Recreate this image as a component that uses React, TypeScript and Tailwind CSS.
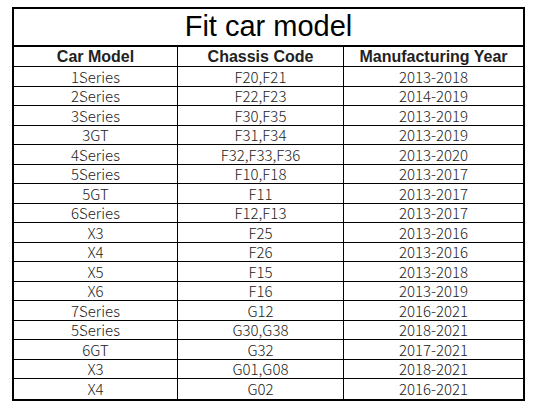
const rows: [string, string, string][] = [
  ['1Series', 'F20,F21', '2013-2018'],
  ['2Series', 'F22,F23', '2014-2019'],
  ['3Series', 'F30,F35', '2013-2019'],
  ['3GT', 'F31,F34', '2013-2019'],
  ['4Series', 'F32,F33,F36', '2013-2020'],
  ['5Series', 'F10,F18', '2013-2017'],
  ['5GT', 'F11', '2013-2017'],
  ['6Series', 'F12,F13', '2013-2017'],
  ['X3', 'F25', '2013-2016'],
  ['X4', 'F26', '2013-2016'],
  ['X5', 'F15', '2013-2018'],
  ['X6', 'F16', '2013-2019'],
  ['7Series', 'G12', '2016-2021'],
  ['5Series', 'G30,G38', '2018-2021'],
  ['6GT', 'G32', '2017-2021'],
  ['X3', 'G01,G08', '2018-2021'],
  ['X4', 'G02', '2016-2021'],
];

const cols = 'grid grid-cols-[164px_166px_179px]';

export default function App() {
  return (
    <div className="w-[552px] h-[408px] bg-white pt-[7px] pl-[12px]">
      <div className="w-[513px] border-2 border-black text-black">
        <div className="h-[38px] border-b-2 border-black flex items-center justify-center font-['Liberation_Sans',Arial,sans-serif] text-[29px] leading-none pb-[1px]">
          Fit car model
        </div>
        <div className={`${cols} h-[20px] border-b border-black font-['Liberation_Sans',Arial,sans-serif] font-bold text-[16px] leading-none text-[#222]`}>
          <div className="border-r border-black flex items-center justify-center">Car Model</div>
          <div className="border-r border-black flex items-center justify-center">Chassis Code</div>
          <div className="flex items-center justify-center">Manufacturing Year</div>
        </div>
        {rows.map((r, i) => (
          <div
            key={i}
            className={`${cols} h-[19.5px] ${i < rows.length - 1 ? 'border-b border-black' : ''} font-['Noto_Sans_CJK_SC',sans-serif] font-light text-[15px] leading-none text-[#222]`}
          >
            <div className="border-r border-black flex items-center justify-center">{r[0]}</div>
            <div className="border-r border-black flex items-center justify-center">{r[1]}</div>
            <div className="flex items-center justify-center">{r[2]}</div>
          </div>
        ))}
      </div>
    </div>
  );
}
